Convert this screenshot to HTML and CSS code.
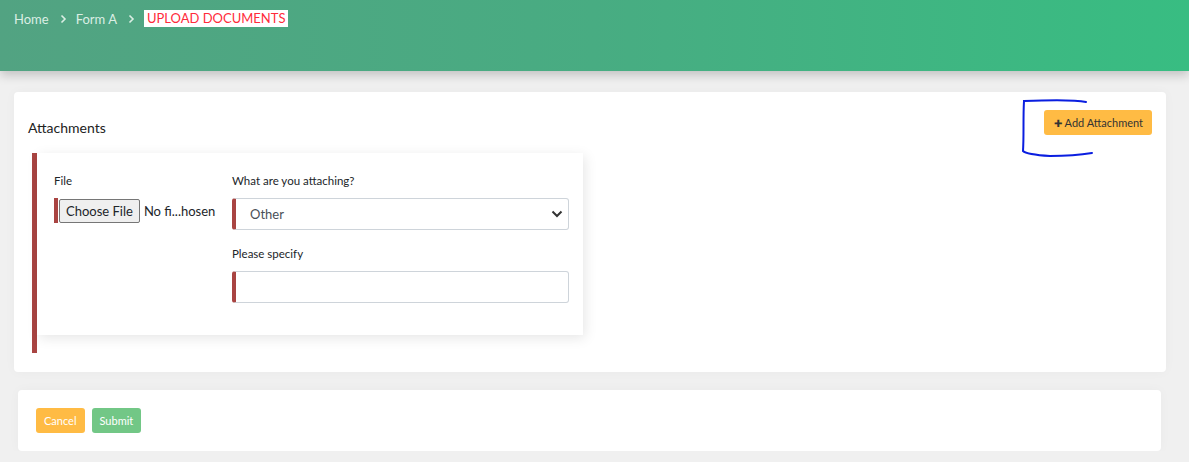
FILE: index.html
```html
<!DOCTYPE html>
<html>
<head>
    <title>Upload Documents</title>
    <meta name="viewport" content="width=device-width, initial-scale=1.0">
    <link rel="stylesheet" href="styles.css">
</head>

<body>
    <header class="topbar">
        <ul class="crumbs">
            <li><a>Home</a></li>
            <li class="sep"><svg width="7" height="10" viewBox="0 0 7 10"><path d="M1.5 1.5 L5 5 L1.5 8.5" fill="none" stroke="#dbeee4" stroke-width="1.6"/></svg></li>
            <li><a>Form A</a></li>
            <li class="sep"><svg width="7" height="10" viewBox="0 0 7 10"><path d="M1.5 1.5 L5 5 L1.5 8.5" fill="none" stroke="#dbeee4" stroke-width="1.6"/></svg></li>
            <li class="current">UPLOAD DOCUMENTS</li>
        </ul>
    </header>

    <div class="content">
        <div class="card card-main">
            <div class="card-head">
                <h4>Attachments</h4>
                <button class="btn btn-warning btn-add"><span class="plus">&#10010;</span> Add Attachment</button>
                <svg class="scribble" width="80" height="62" viewBox="0 0 80 62">
                    <path d="M66 4 C52 1 28 2 4 3 C3 20 4 38 3 53 C6 56 14 57 30 58 C46 58 60 57 72 55"
                          fill="none" stroke="#0a1ee0" stroke-width="2" stroke-linecap="round"/>
                </svg>
            </div>

            <div class="attachment">
                <div class="attachment-body">
                    <div class="field field-file">
                        <label>File</label>
                        <div class="file-wrap">
                            <span class="file-btn">Choose File</span>
                            <span class="file-name">No fi...hosen</span>
                        </div>
                    </div>
                    <div class="field field-wide">
                        <label>What are you attaching?</label>
                        <div class="select">
                            <span>Other</span>
                            <svg width="12" height="8" viewBox="0 0 12 8"><path d="M1.5 1.5 L6 6 L10.5 1.5" fill="none" stroke="#333" stroke-width="2"/></svg>
                        </div>
                        <label class="spaced">Please specify</label>
                        <div class="text-input"></div>
                    </div>
                </div>
            </div>
        </div>

        <div class="card card-actions">
            <button class="btn btn-warning btn-light">Cancel</button>
            <button class="btn btn-success btn-light">Submit</button>
        </div>
    </div>
</body>
</html>
```

FILE: styles.css
```css
body {
    margin: 0;
    background-color: #f0f0f0;
    font-family: Lato, "Open Sans", sans-serif;
    font-size: 12px;
    color: #212529;
}

.topbar {
    height: 71px;
    background: linear-gradient(90deg, #52a382 0%, #48ac82 50%, #38bd82 100%);
    box-shadow: 0 4px 10px rgba(0, 0, 0, 0.2);
}

.crumbs {
    list-style-type: none;
    margin: 0;
    padding: 10px 14px 0;
    display: flex;
    align-items: center;
    font-size: 13px;
    color: #dbeee4;
}

.crumbs .sep {
    display: flex;
    margin: 0 9px 0 11px;
}

.crumbs .current {
    background-color: white;
    color: #ff2b3b;
    padding: 0 3px;
    margin-left: 0;
    line-height: 17px;
}

.content {
    padding: 21px 23px 0 14px;
}

.card {
    background-color: white;
    border-radius: 4px;
    box-shadow: 0 0 12px rgba(0, 0, 0, 0.03);
}

.card-main {
    padding-bottom: 19px;
}

.card-head {
    position: relative;
    display: flex;
    justify-content: space-between;
    align-items: flex-start;
    padding: 18px 14px 0 14px;
}

.card-head h4 {
    margin: 0 0 9px 0;
    font-size: 14px;
    font-weight: normal;
    line-height: 35px;
    color: #222;
}

.btn {
    border: none;
    border-radius: 3px;
    font-family: inherit;
    font-size: 11px;
    padding: 0 8px;
    height: 25px;
}

.btn-warning {
    background-color: #ffbb44;
    color: #333;
}

.btn-success {
    background-color: #72c786;
}

.btn-light {
    color: white;
}

.btn-add {
    padding: 0 9px 0 10px;
}

.btn-add .plus {
    font-size: 10px;
}

.scribble {
    position: absolute;
    right: 66px;
    top: 6px;
}

.attachment {
    margin: 1px 0 0 18px;
    border-left: 5px solid #a94442;
    height: 200px;
    width: 546px;
}

.attachment-body {
    display: flex;
    background-color: white;
    padding: 21px 14px 0 17px;
    height: 161px;
    margin-top: -2px;
    box-shadow: 2px 3px 12px rgba(0, 0, 0, 0.1);
}

.field label {
    display: block;
    font-size: 11.5px;
    line-height: 14px;
    margin-bottom: 10px;
}

.field-file {
    width: 178px;
}

.file-wrap {
    display: flex;
    align-items: center;
    border-left: 4px solid #a94442;
    height: 25px;
}

.file-btn {
    border: 1px solid #767676;
    border-radius: 2px;
    background-color: #efefef;
    padding: 0 6px;
    height: 22px;
    line-height: 22px;
    font-size: 13px;
    margin-left: 1px;
}

.file-name {
    margin-left: 4px;
    font-size: 13px;
}

.field-wide {
    width: 337px;
}

.select, .text-input {
    box-sizing: border-box;
    height: 32px;
    border: 1px solid #ced4da;
    border-left: 4px solid #a94442;
    border-radius: 3px;
}

.select {
    display: flex;
    justify-content: space-between;
    align-items: center;
    padding: 0 5px 0 14px;
    font-size: 13px;
    color: #495057;
}

.spaced {
    margin-top: 17px;
}

.card-actions {
    margin: 18px 5px 0 4px;
    padding: 18px 18px;
    height: 25px;
    display: flex;
    gap: 7px;
}

.card-actions .btn {
    padding: 0 8px;
}
```
